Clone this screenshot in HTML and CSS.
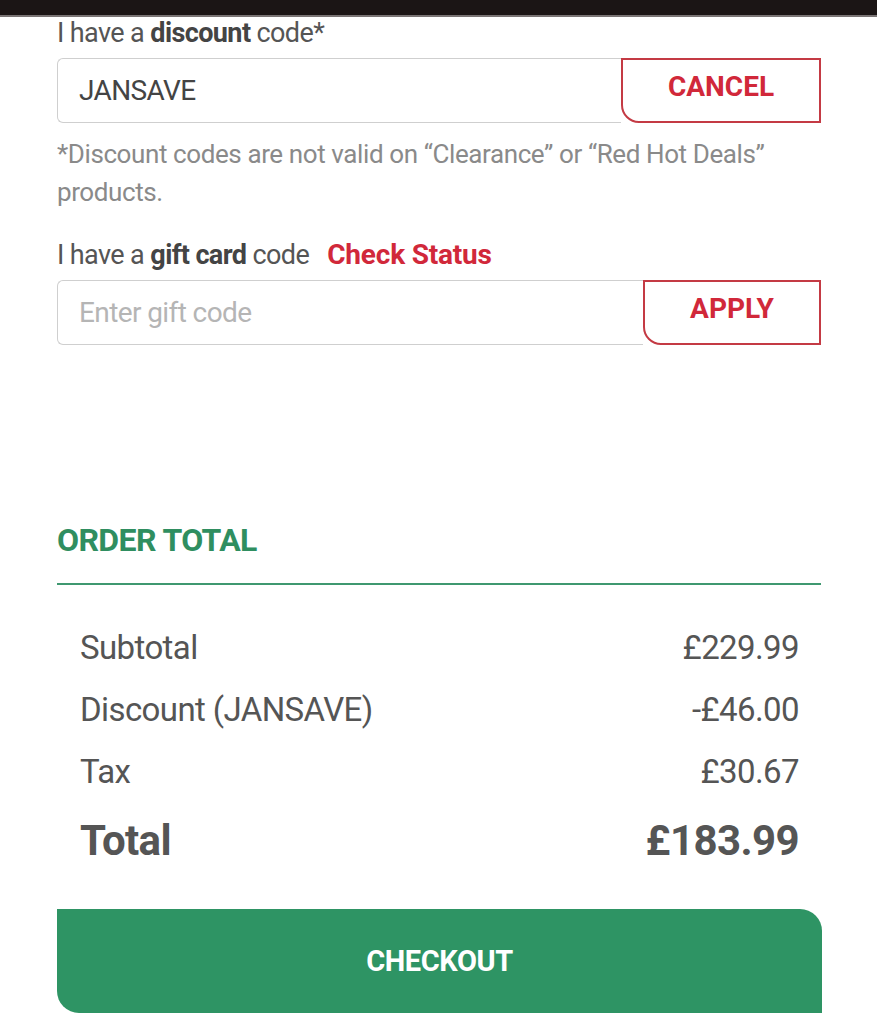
FILE: index.html
```html
<!DOCTYPE html>
<html>
<head>
<meta charset="utf-8">
<link rel="stylesheet" href="styles.css">
</head>
<body>
<div class="topbar"></div>
<main class="wrap">
  <section class="codes">
    <div class="label">I have a <b>discount</b> code*</div>
    <div class="field">
      <div class="input">JANSAVE</div>
      <button class="btn-out cancel">CANCEL</button>
    </div>
    <p class="note">*Discount codes are not valid on “Clearance” or “Red Hot Deals” products.</p>
    <div class="label gift">I have a <b>gift card</b> code <a class="check">Check Status</a></div>
    <div class="field">
      <div class="input placeholder">Enter gift code</div>
      <button class="btn-out apply">APPLY</button>
    </div>
  </section>
  <section class="order">
    <h2 class="title">ORDER TOTAL</h2>
    <div class="rows">
      <div class="row"><span>Subtotal</span><span>£229.99</span></div>
      <div class="row"><span>Discount (JANSAVE)</span><span>-£46.00</span></div>
      <div class="row"><span>Tax</span><span>£30.67</span></div>
      <div class="row total"><span>Total</span><span>£183.99</span></div>
    </div>
    <button class="checkout">CHECKOUT</button>
  </section>
</main>
</body>
</html>
```
FILE: styles.css
```css
html, body { margin: 0; padding: 0; background: #fff; }
body { font-family: "Roboto", "Liberation Sans", sans-serif; color: #555; }
.topbar { height: 15px; background: #1b1515; border-bottom: 2px solid #7a7474; }
.wrap { padding: 0 56px 0 57px; }
.label { font-size: 27px; letter-spacing: -0.6px; color: #555; line-height: 32px; margin-top: 0; }
.label b { font-weight: 700; color: #444; }
.field { display: flex; height: 65px; margin-top: 9px; }
.input { flex: 1; border: 1px solid #cfcfcf; border-right: none; border-radius: 6px 0 0 6px; display: flex; align-items: center; padding-left: 21px; font-size: 28px; letter-spacing: -0.6px; color: #444; }
.input.placeholder { color: #b5b5b5; }
.btn-out { background: #fff; border: 2px solid #c43a44; border-radius: 0 0 0 18px; color: #d1283a; font-family: "Roboto", sans-serif; font-weight: 700; font-size: 28px; letter-spacing: 0; padding: 0; }
.cancel { width: 200px; padding-bottom: 8px; }
.apply { width: 178px; padding-bottom: 8px; }
.note { margin: 12px 0 0; font-size: 26px; line-height: 38px; color: #8a8a8a; letter-spacing: -0.4px; width: 770px; }
.gift { margin-top: 28px; }
.check { color: #d1283a; font-weight: 700; font-size: 28px; margin-left: 12px; letter-spacing: -0.2px; }
.order { margin-top: 177px; }
.title { margin: 0; font-size: 32px; line-height: 36px; font-weight: 700; color: #2f8e60; letter-spacing: -0.6px; padding-bottom: 25px; border-bottom: 2px solid #3f9870; }
.rows { padding: 32px 22px 0 23px; }
.row { display: flex; justify-content: space-between; font-size: 33px; line-height: 62px; color: #555; letter-spacing: -0.6px; height: 62px; }
.row.total { font-size: 42px; font-weight: 700; line-height: 76px; height: 76px; color: #555; }
.checkout { display: block; width: 765px; height: 104px; margin-top: 30px; border: none; background: #2e9464; color: #fff; border-radius: 0 22px 0 22px; font-family: "Roboto", sans-serif; font-size: 29px; font-weight: 700; letter-spacing: -0.4px; }
```
